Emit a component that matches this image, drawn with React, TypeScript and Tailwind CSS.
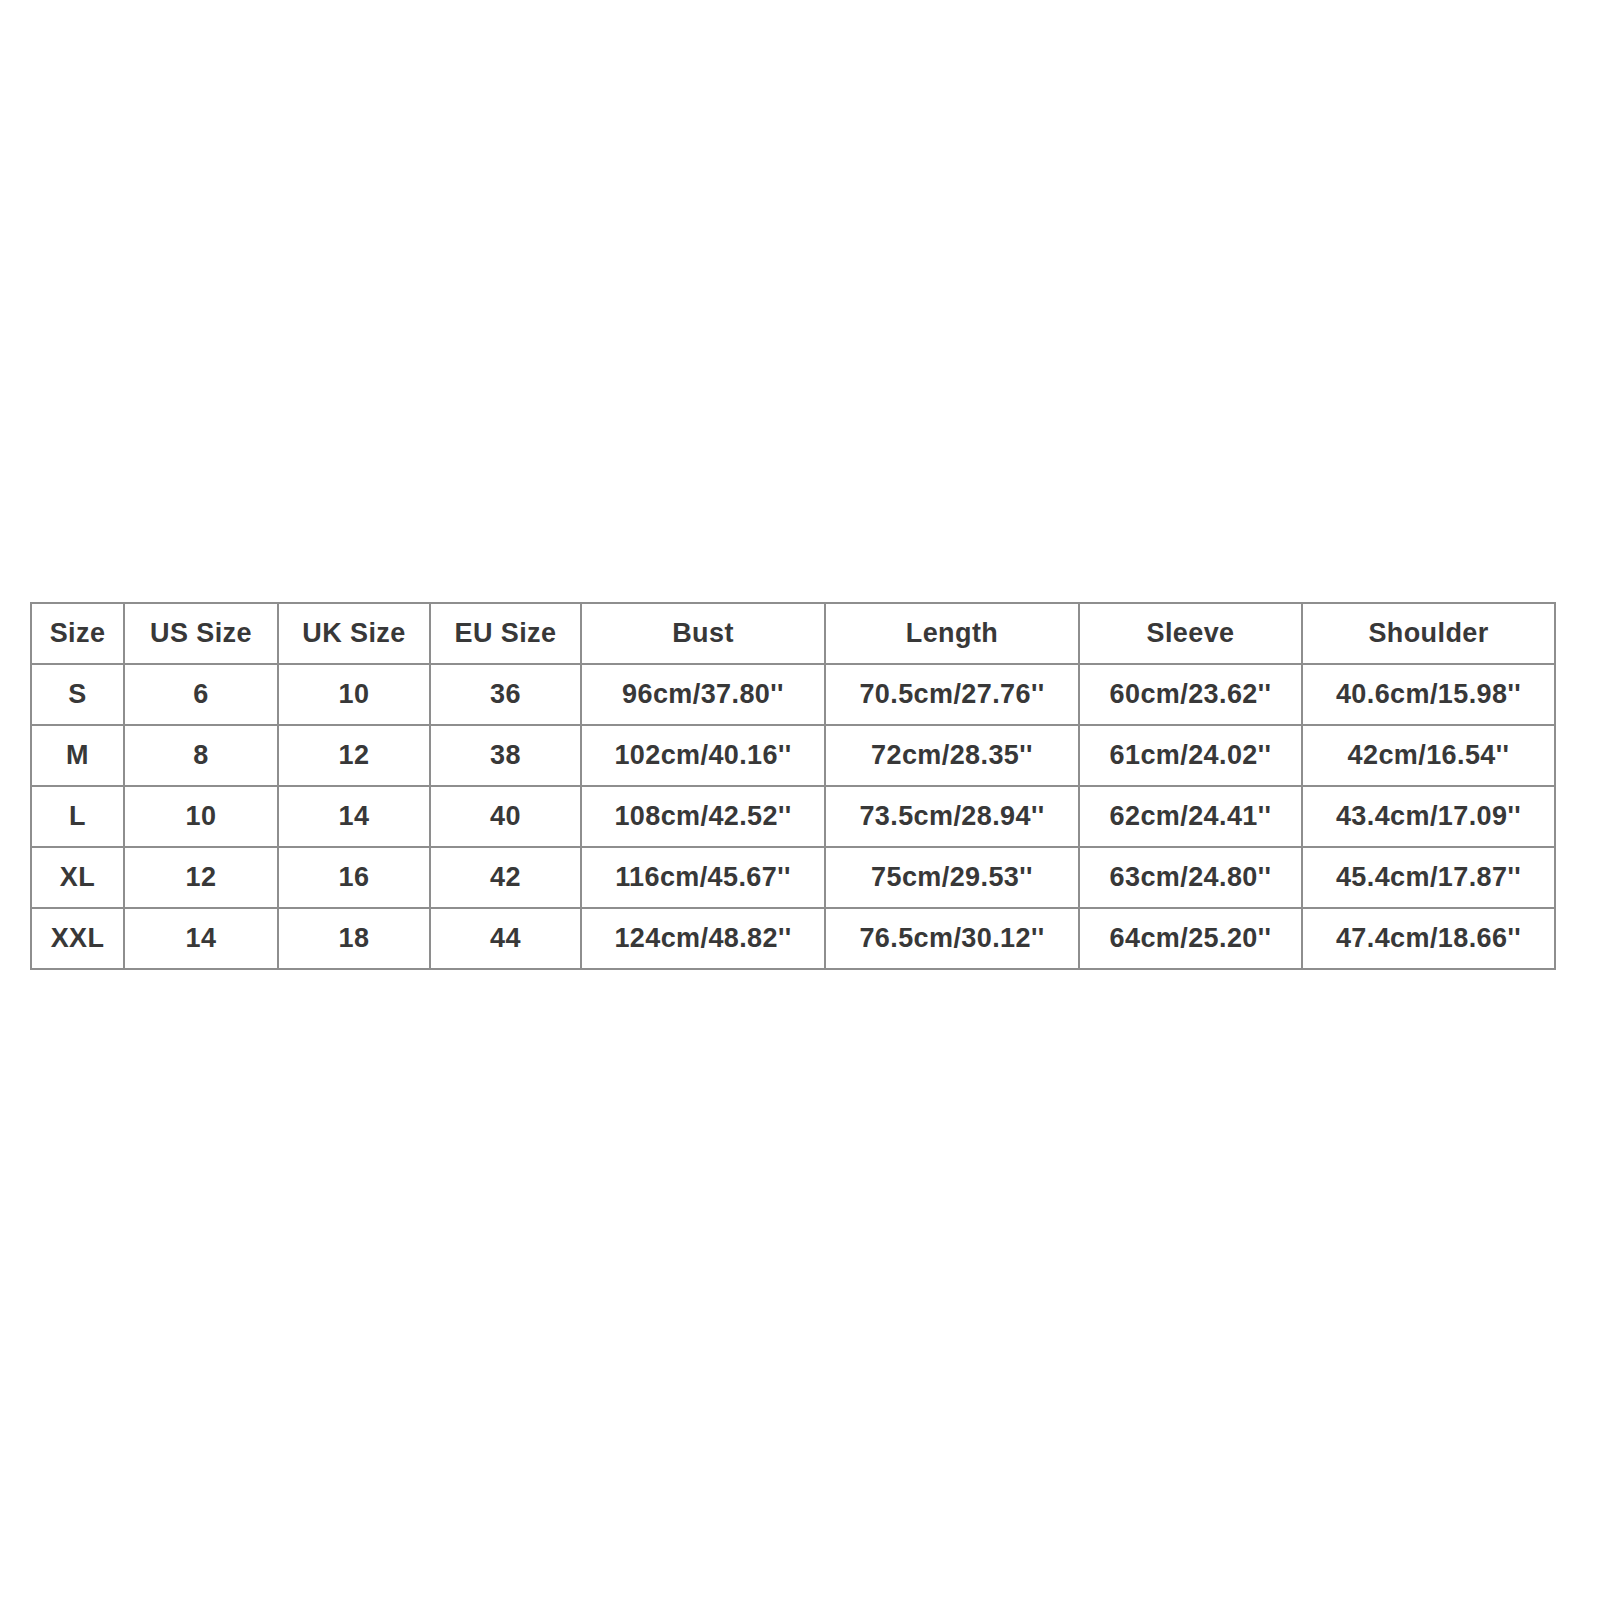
const headers = ["Size", "US Size", "UK Size", "EU Size", "Bust", "Length", "Sleeve", "Shoulder"];

const widths = ["w-[93px]", "w-[154px]", "w-[152px]", "w-[151px]", "w-[244px]", "w-[254px]", "w-[223px]", "w-[253px]"];

const rows = [
  ["S", "6", "10", "36", "96cm/37.80''", "70.5cm/27.76''", "60cm/23.62''", "40.6cm/15.98''"],
  ["M", "8", "12", "38", "102cm/40.16''", "72cm/28.35''", "61cm/24.02''", "42cm/16.54''"],
  ["L", "10", "14", "40", "108cm/42.52''", "73.5cm/28.94''", "62cm/24.41''", "43.4cm/17.09''"],
  ["XL", "12", "16", "42", "116cm/45.67''", "75cm/29.53''", "63cm/24.80''", "45.4cm/17.87''"],
  ["XXL", "14", "18", "44", "124cm/48.82''", "76.5cm/30.12''", "64cm/25.20''", "47.4cm/18.66''"],
];

export default function App() {
  return (
    <main className="min-h-[1600px] bg-white pl-[30px] pt-[602px]">
      <table
        className="table-fixed border-collapse text-center text-[27px] font-bold tracking-[0.4px] text-[#383838]"
        style={{ fontFamily: '"Liberation Sans", Arial, sans-serif' }}
      >
        <thead>
          <tr className="h-[61px]">
            {headers.map((h, i) => (
              <th key={h} className={`${widths[i]} border-2 border-[#8e8e8e] p-0 font-bold`}>
                {h}
              </th>
            ))}
          </tr>
        </thead>
        <tbody>
          {rows.map((row) => (
            <tr key={row[0]} className="h-[61px]">
              {row.map((cell, i) => (
                <td key={i} className="border-2 border-[#8e8e8e] p-0">
                  {cell}
                </td>
              ))}
            </tr>
          ))}
        </tbody>
      </table>
    </main>
  );
}
